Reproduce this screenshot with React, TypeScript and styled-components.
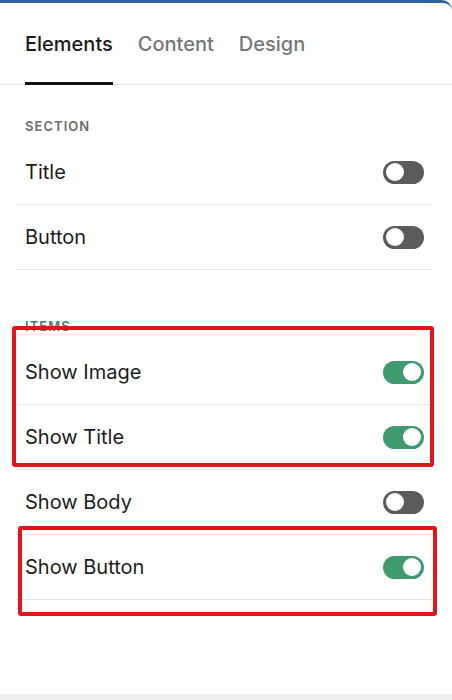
import React, {useState} from 'react';
import styled, {createGlobalStyle} from 'styled-components';

const GlobalStyle = createGlobalStyle`
    html, body {
        margin: 0;
        padding: 0;
        background: #ffffff;
    }

    body {
        font-family: Inter, "Noto Sans", "Liberation Sans", sans-serif;
        -webkit-font-smoothing: antialiased;
    }

    * {
        box-sizing: border-box;
    }
`;

const Panel = styled.div`
    position: relative;
    display: flex;
    flex-direction: column;
    width: 452px;
    height: 700px;
    background: #ffffff;
    border-top: 3px solid #2f629e;
    border-top-right-radius: 10px;
    overflow: hidden;
`;

const TabBar = styled.div`
    display: flex;
    gap: 25px;
    height: 82px;
    padding: 3px 25px 0;
    border-bottom: 1px solid #e3e3e3;
`;

const Tab = styled.button<{$active?: boolean}>`
    display: flex;
    align-items: center;
    margin: 0 0 -1px;
    padding: 0;
    border: none;
    border-bottom: 3px solid ${({$active}) => ($active ? '#111111' : 'transparent')};
    background: none;
    font-family: inherit;
    font-size: 20px;
    font-weight: 500;
    color: ${({$active}) => ($active ? '#1a1a1a' : '#777777')};
    cursor: pointer;
`;

const Section = styled.section<{$top: number}>`
    display: flex;
    flex-direction: column;
    padding: ${({$top}) => $top}px 20px 0 16px;
`;

const SectionLabel = styled.div`
    height: 16px;
    margin-bottom: 6px;
    padding-left: 9px;
    font-size: 13px;
    line-height: 16px;
    font-weight: 600;
    letter-spacing: 0.08em;
    text-transform: uppercase;
    color: #6c6c6c;
`;

const Row = styled.div`
    display: flex;
    align-items: center;
    justify-content: space-between;
    height: 65px;
    padding: 0 8px 0 9px;
    border-bottom: 1px solid #e6e6e6;
`;

const RowLabel = styled.span`
    font-size: 20px;
    color: #1c1c1c;
`;

const Toggle = styled.button<{$on: boolean}>`
    display: flex;
    align-items: center;
    justify-content: ${({$on}) => ($on ? 'flex-end' : 'flex-start')};
    width: 41px;
    height: 23px;
    padding: 0 3px;
    border: none;
    border-radius: 12px;
    background: ${({$on}) => ($on ? '#3f9a6f' : '#5b5b5b')};
    cursor: pointer;
`;

const Knob = styled.span`
    width: 18px;
    height: 18px;
    border-radius: 50%;
    background: #ffffff;
`;

const Highlight = styled.div<{$left: number; $top: number; $width: number; $height: number}>`
    position: absolute;
    left: ${({$left}) => $left}px;
    top: ${({$top}) => $top}px;
    width: ${({$width}) => $width}px;
    height: ${({$height}) => $height}px;
    border: 4px solid #e2141c;
    border-radius: 3px;
    pointer-events: none;
`;

const Footer = styled.div`
    margin-top: auto;
    height: 6px;
    background: #eeeeee;
`;

type Item = {
    key: string;
    label: string;
};

const sectionItems: Item[] = [
    {key: 'title', label: 'Title'},
    {key: 'button', label: 'Button'},
];

const itemItems: Item[] = [
    {key: 'showImage', label: 'Show Image'},
    {key: 'showTitle', label: 'Show Title'},
    {key: 'showBody', label: 'Show Body'},
    {key: 'showButton', label: 'Show Button'},
];

const App = (): JSX.Element => {
    const [tab, setTab] = useState('Elements');
    const [values, setValues] = useState<Record<string, boolean>>({
        title: false,
        button: false,
        showImage: true,
        showTitle: true,
        showBody: false,
        showButton: true,
    });

    const flip = (key: string) => {
        setValues((prev) => ({...prev, [key]: !prev[key]}));
    };

    const renderRow = (item: Item) => (
        <Row key={item.key}>
            <RowLabel>{item.label}</RowLabel>
            <Toggle
                $on={values[item.key]}
                onClick={() => flip(item.key)}
                aria-label={item.label}
            >
                <Knob/>
            </Toggle>
        </Row>
    );

    return (
        <>
            <GlobalStyle/>
            <Panel>
                <TabBar>
                    {['Elements', 'Content', 'Design'].map((name) => (
                        <Tab
                            key={name}
                            $active={tab === name}
                            onClick={() => setTab(name)}
                        >
                            {name}
                        </Tab>
                    ))}
                </TabBar>
                <Section $top={33}>
                    <SectionLabel>{'Section'}</SectionLabel>
                    {sectionItems.map(renderRow)}
                </Section>
                <Section $top={48}>
                    <SectionLabel>{'Items'}</SectionLabel>
                    {itemItems.map(renderRow)}
                </Section>
                <Footer/>

                {/* annotation boxes drawn over the screenshot */}
                <Highlight
                    $left={12}
                    $top={323}
                    $width={422}
                    $height={141}
                />
                <Highlight
                    $left={18}
                    $top={523}
                    $width={419}
                    $height={90}
                />
            </Panel>
        </>
    );
};

export default App;
